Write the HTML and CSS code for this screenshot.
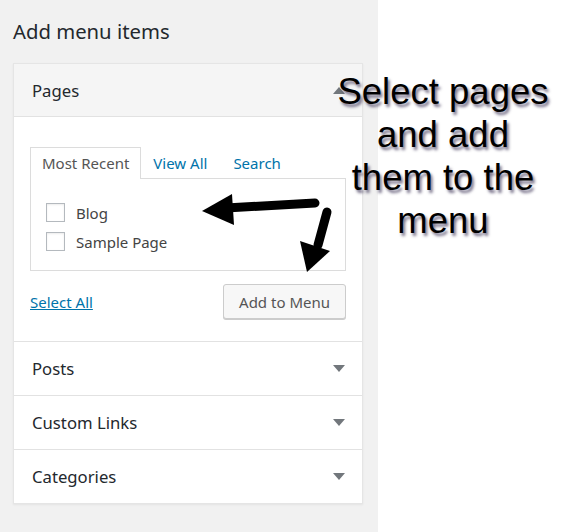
FILE: index.html
```html
<!DOCTYPE html>
<html>
<head>
<meta charset="utf-8">
<link rel="stylesheet" href="styles.css">
</head>
<body>
<div class="page">
  <div class="sidebar">
    <h2 class="title">Add menu items</h2>
    <div class="card">
      <div class="sec-head open">
        <span class="sec-title">Pages</span>
        <span class="tri up"></span>
      </div>
      <div class="sec-body">
        <div class="tabs">
          <span class="tab active">Most Recent</span>
          <span class="tab">View All</span>
          <span class="tab">Search</span>
        </div>
        <div class="panel">
          <label class="row"><span class="cb"></span><span>Blog</span></label>
          <label class="row"><span class="cb"></span><span>Sample Page</span></label>
        </div>
        <div class="actions">
          <a class="select-all">Select All</a>
          <button class="btn">Add to Menu</button>
        </div>
      </div>
      <div class="sec-head">
        <span class="sec-title">Posts</span>
        <span class="tri"></span>
      </div>
      <div class="sec-head">
        <span class="sec-title">Custom Links</span>
        <span class="tri"></span>
      </div>
      <div class="sec-head last">
        <span class="sec-title">Categories</span>
        <span class="tri"></span>
      </div>
    </div>
  </div>
  <div class="note">Select pages<br>and add<br>them to the<br>menu</div>
  <svg class="arrows" width="574" height="532" viewBox="0 0 574 532">
    <path d="M315 203 L226 208" stroke="#000" stroke-width="9" stroke-linecap="round" fill="none"/>
    <polygon points="202,211 232,194 234,225" fill="#000"/>
    <path d="M327 212 L318 245" stroke="#000" stroke-width="9" stroke-linecap="round" fill="none"/>
    <polygon points="307,272 300,241 330,251" fill="#000"/>
  </svg>
</div>
</body>
</html>
```
FILE: styles.css
```css
html, body {
  margin: 0;
  padding: 0;
  background: #fff;
}
body {
  font-family: "Noto Sans", "Open Sans", sans-serif;
  color: #23282d;
}
.page {
  position: relative;
  display: flex;
  width: 574px;
  height: 532px;
  overflow: hidden;
}
.sidebar {
  width: 378px;
  height: 532px;
  background: #f1f1f1;
  padding: 0 15px 0 13px;
  box-sizing: border-box;
}
.title {
  margin: 0 0 19px;
  padding-top: 18px;
  font-size: 20.3px;
  line-height: 26px;
  font-weight: 400;
  color: #23282d;
}
.card {
  width: 350px;
  box-sizing: border-box;
  border: 1px solid #e5e5e5;
  background: #fff;
  box-shadow: 0 1px 2px rgba(0,0,0,.06);
}
.sec-head {
  height: 53px;
  display: flex;
  align-items: center;
  justify-content: space-between;
  padding: 0 17px 0 18px;
  border-bottom: 1px solid #e2e2e2;
  background: #fff;
}
.sec-head.open {
  height: 52px;
  background: #f5f5f5;
}
.sec-head.last {
  border-bottom: none;
}
.sec-title {
  font-size: 16.7px;
  color: #23282d;
}
.tri {
  width: 0;
  height: 0;
  border-left: 6px solid transparent;
  border-right: 6px solid transparent;
  border-top: 7px solid #72777c;
}
.tri.up {
  border-top: none;
  border-bottom: 7px solid #72777c;
}
.sec-body {
  padding: 30px 16px 22px;
  border-bottom: 1px solid #e2e2e2;
}
.tabs {
  display: flex;
  font-size: 15px;
}
.tab {
  height: 30px;
  line-height: 31px;
  padding: 0 11px;
  border: 1px solid transparent;
  border-bottom: none;
  color: #0073aa;
}
.tab + .tab + .tab {
  padding-left: 13px;
}
.tab.active {
  color: #555;
  border-color: #dcdcdc;
  background: #fff;
  position: relative;
  margin-bottom: -1px;
  height: 31px;
}
.panel {
  border: 1px solid #dcdcdc;
  padding: 19px 15px 14px;
  background: #fff;
}
.row {
  display: flex;
  align-items: center;
  height: 29px;
  gap: 11px;
  font-size: 15px;
  color: #444;
}
.cb {
  width: 17px;
  height: 17px;
  border: 1px solid #b4b9be;
  background: #fff;
  box-shadow: inset 0 1px 2px rgba(0,0,0,.08);
}
.actions {
  display: flex;
  justify-content: space-between;
  align-items: center;
  margin-top: 13px;
}
.select-all {
  font-size: 15px;
  color: #0073aa;
  text-decoration: underline;
}
.btn {
  height: 35px;
  padding: 0 15px;
  font-family: "Noto Sans", "Open Sans", sans-serif;
  font-size: 15px;
  color: #555;
  background: #f7f7f7;
  border: 1px solid #ccc;
  border-radius: 3px;
  box-shadow: 0 1px 0 #ccc;
}
.note {
  position: absolute;
  left: 308px;
  top: 70px;
  width: 270px;
  text-align: center;
  font-family: "Liberation Sans", Arial, sans-serif;
  font-size: 36.5px;
  line-height: 43px;
  color: #000;
  text-shadow: 2px 3px 3px rgba(30,20,60,.6);
}
.arrows {
  position: absolute;
  left: 0;
  top: 0;
  pointer-events: none;
}
```
